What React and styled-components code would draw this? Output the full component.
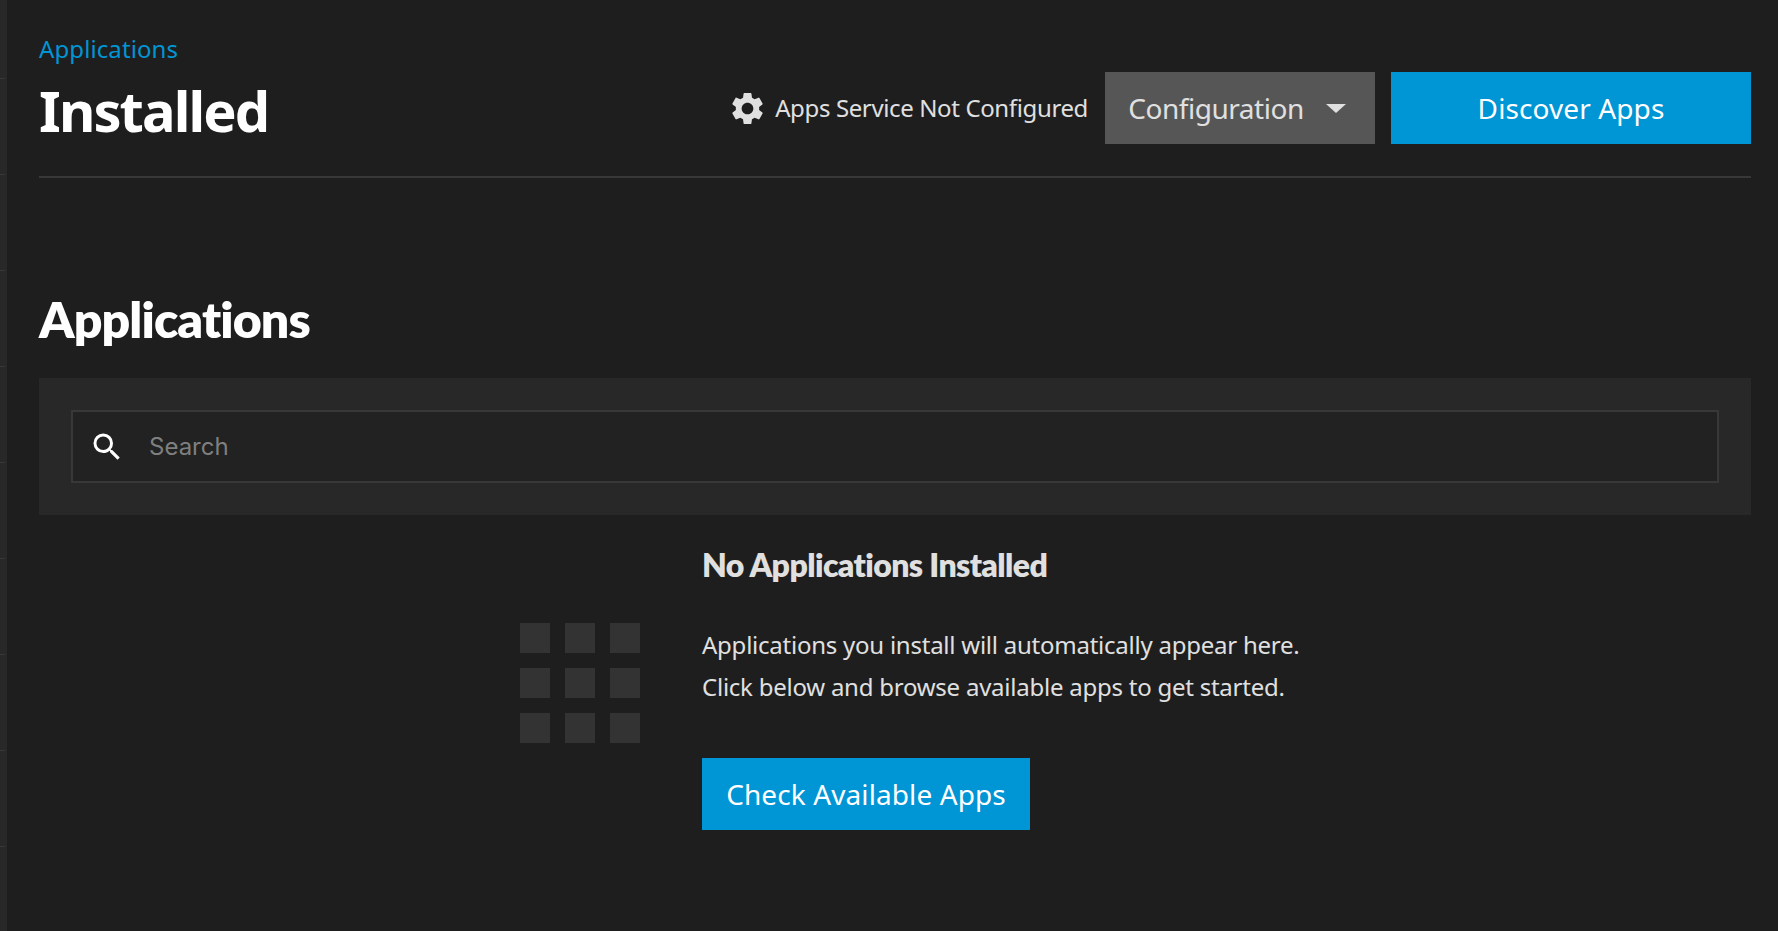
import React from "react";
import styled, { createGlobalStyle } from "styled-components";

const Global = createGlobalStyle`
  html, body { margin: 0; height: 100%; background: #1e1e1e; overflow: hidden; }
  #root { height: 100%; }
  * { box-sizing: border-box; }
`;
const Shell = styled.div`display: flex; height: 931px; background: #1e1e1e; font-family: "Noto Sans", sans-serif; color: #e0e0e0;`;
const Rail = styled.div`
  width: 7px; flex: none; background: #282828;
  display: flex; flex-direction: column; padding-top: 78px; gap: 95px;
`;
const Notch = styled.div`height: 1px; width: 5px; background: #383838;`;
const Page = styled.main`flex: 1; padding: 0 27px 0 32px; min-width: 0;`;
const Header = styled.header`
  display: flex; justify-content: space-between; align-items: flex-start;
  height: 178px; border-bottom: 2px solid #383838;
`;
const Titles = styled.div`padding-top: 34px;`;
const Crumb = styled.a`display: block; color: #0095d5; font-size: 24px; line-height: 30px; letter-spacing: 0.1px;`;
const PageTitle = styled.h1`margin: 14px 0 0; font: 700 56px/64px "Noto Sans", sans-serif; color: #fff; letter-spacing: -1.9px;`;
const Actions = styled.div`display: flex; align-items: center; height: 72px; margin-top: 72px;`;
const Status = styled.div`display: flex; align-items: center; gap: 8px; font-size: 24px; line-height: 32px; margin-right: 17px; letter-spacing: -0.37px;`;
const Button = styled.button`
  display: flex; align-items: center; justify-content: center; height: 72px; border: 0; padding: 0;
  font: 400 28px "Noto Sans", sans-serif;
  letter-spacing: ${p => p.$primary ? "0.1px" : "-0.46px"};
  width: ${p => p.$w}px; color: ${p => p.$primary ? "#fff" : "#e0e0e0"};
  background: ${p => p.$primary ? "#0095d5" : "#565656"};
  margin-left: ${p => p.$ml || 0}px;
  margin-top: ${p => p.$mt || 0}px;
`;
const Caret = styled.span`
  width: 0; height: 0; margin: 0 6px 0 22px;
  border-left: 10.5px solid transparent; border-right: 10.5px solid transparent; border-top: 9px solid #e0e0e0;
`;
const SectionTitle = styled.h2`
  margin: 109px 0 0; height: 91px; font: 800 50px/64px Lato, sans-serif; color: #fff;
  letter-spacing: -0.9px; font-variant-ligatures: none;
`;
const Panel = styled.section`background: #282828; padding: 32px; height: 137px;`;
const SearchBox = styled.div`
  height: 73px; border: 2px solid #383838; background: #222; display: flex; align-items: center;
  padding-left: 16px; gap: 24px; color: #7f7f7f; font: 400 24px Inter, sans-serif;
`;
const Empty = styled.div`display: flex; align-items: flex-start; gap: 62px; padding: 30px 0 0 481px;`;
const Squares = styled.div`display: grid; grid-template-columns: repeat(3, 30px); grid-auto-rows: 30px; gap: 15px; margin-top: 78px;`;
const Square = styled.div`background: #333;`;
const EmptyText = styled.div`display: flex; flex-direction: column; align-items: flex-start;`;
const EmptyTitle = styled.h3`
  margin: 0 0 39px; font: 800 32px/40px Lato, sans-serif; letter-spacing: -0.6px; font-variant-ligatures: none;
`;
const Copy = styled.p`margin: 0; font-size: 24px; line-height: 42px; letter-spacing: -0.24px;`;

const Gear = () => (
  <svg width="39" height="39" viewBox="0 0 24 24" fill="#e0e0e0" aria-hidden="true">
    <path d="M19.14 12.94c.04-.3.06-.61.06-.94 0-.32-.02-.64-.07-.94l2.03-1.58a.49.49 0 0 0 .12-.61l-1.92-3.32a.488.488 0 0 0-.59-.22l-2.39.96c-.5-.38-1.03-.7-1.62-.94l-.36-2.54a.484.484 0 0 0-.48-.41h-3.84c-.24 0-.43.17-.47.41l-.36 2.54c-.59.24-1.13.57-1.62.94l-2.39-.96c-.22-.08-.47 0-.59.22L2.74 8.87c-.12.21-.08.47.12.61l2.03 1.58c-.05.3-.09.63-.09.94s.02.64.07.94l-2.03 1.58a.49.49 0 0 0-.12.61l1.92 3.32c.12.22.37.29.59.22l2.39-.96c.5.38 1.03.7 1.62.94l.36 2.54c.05.24.24.41.48.41h3.84c.24 0 .44-.17.47-.41l.36-2.54c.59-.24 1.13-.56 1.62-.94l2.39.96c.22.08.47 0 .59-.22l1.92-3.32c.12-.22.07-.47-.12-.61l-2.01-1.58zM12 15.6c-1.98 0-3.6-1.62-3.6-3.6s1.62-3.6 3.6-3.6 3.6 1.62 3.6 3.6-1.62 3.6-3.6 3.6z"/>
  </svg>
);
const SearchIcon = () => (
  <svg width="36" height="36" viewBox="0 0 24 24" fill="#fff" aria-hidden="true">
    <path d="M15.5 14h-.79l-.28-.27A6.471 6.471 0 0 0 16 9.5 6.5 6.5 0 1 0 9.5 16c1.61 0 3.09-.59 4.23-1.57l.27.28v.79l5 4.99L20.49 19l-4.99-5zm-6 0C7.01 14 5 11.99 5 9.5S7.01 5 9.5 5 14 7.01 14 9.5 11.99 14 9.5 14z"/>
  </svg>
);

export default function App() {
  return (
    <Shell>
      <Global />
      <Rail>{Array.from({ length: 9 }, (_, i) => <Notch key={i} />)}</Rail>
      <Page>
        <Header>
          <Titles>
            <Crumb>Applications</Crumb>
            <PageTitle>Installed</PageTitle>
          </Titles>
          <Actions>
            <Status><Gear />Apps Service Not Configured</Status>
            <Button $w={270}>Configuration<Caret /></Button>
            <Button $w={360} $ml={16} $primary>Discover Apps</Button>
          </Actions>
        </Header>
        <SectionTitle>Applications</SectionTitle>
        <Panel>
          <SearchBox><SearchIcon />Search</SearchBox>
        </Panel>
        <Empty>
          <Squares>{Array.from({ length: 9 }, (_, i) => <Square key={i} />)}</Squares>
          <EmptyText>
            <EmptyTitle>No Applications Installed</EmptyTitle>
            <Copy>Applications you install will automatically appear here.</Copy>
            <Copy>Click below and browse available apps to get started.</Copy>
            <Button $w={328} $mt={50} $primary>Check Available Apps</Button>
          </EmptyText>
        </Empty>
      </Page>
    </Shell>
  );
}
